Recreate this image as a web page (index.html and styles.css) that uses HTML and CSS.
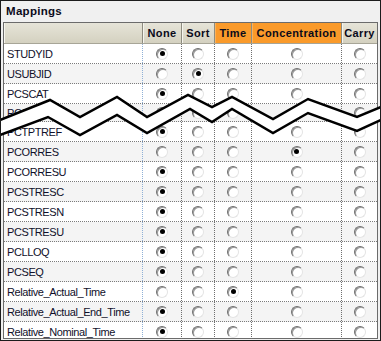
FILE: index.html
```html
<!DOCTYPE html>
<html>
<head>
<meta charset="utf-8">
<link rel="stylesheet" href="styles.css">
</head>
<body>
<div class="frame">
  <div class="title">Mappings</div>
  <div class="grid">
    <div class="head">
      <div class="hcell"></div>
      <div class="hcell">None</div>
      <div class="hcell">Sort</div>
      <div class="hcell hot">Time</div>
      <div class="hcell hot">Concentration</div>
      <div class="hcell last">Carry</div>
    </div>
    <div class="row"><div class="name">STUDYID</div><div class="c"><span class="radio on"></span></div><div class="c"><span class="radio"></span></div><div class="c"><span class="radio"></span></div><div class="c"><span class="radio"></span></div><div class="c last"><span class="radio"></span></div></div>
    <div class="row"><div class="name">USUBJID</div><div class="c"><span class="radio"></span></div><div class="c"><span class="radio on"></span></div><div class="c"><span class="radio"></span></div><div class="c"><span class="radio"></span></div><div class="c last"><span class="radio"></span></div></div>
    <div class="row"><div class="name">PCSCAT</div><div class="c"><span class="radio on"></span></div><div class="c"><span class="radio"></span></div><div class="c"><span class="radio"></span></div><div class="c"><span class="radio"></span></div><div class="c last"><span class="radio"></span></div></div>
    <div class="row cut"><div class="name">PCSPEC</div><div class="c"><span class="radio on"></span></div><div class="c"><span class="radio"></span></div><div class="c"><span class="radio"></span></div><div class="c"><span class="radio"></span></div><div class="c last"><span class="radio"></span></div></div>
    <div class="row"><div class="name">PCTPTREF</div><div class="c"><span class="radio on"></span></div><div class="c"><span class="radio"></span></div><div class="c"><span class="radio"></span></div><div class="c"><span class="radio"></span></div><div class="c last"><span class="radio"></span></div></div>
    <div class="row"><div class="name">PCORRES</div><div class="c"><span class="radio"></span></div><div class="c"><span class="radio"></span></div><div class="c"><span class="radio"></span></div><div class="c"><span class="radio on"></span></div><div class="c last"><span class="radio"></span></div></div>
    <div class="row"><div class="name">PCORRESU</div><div class="c"><span class="radio on"></span></div><div class="c"><span class="radio"></span></div><div class="c"><span class="radio"></span></div><div class="c"><span class="radio"></span></div><div class="c last"><span class="radio"></span></div></div>
    <div class="row"><div class="name">PCSTRESC</div><div class="c"><span class="radio on"></span></div><div class="c"><span class="radio"></span></div><div class="c"><span class="radio"></span></div><div class="c"><span class="radio"></span></div><div class="c last"><span class="radio"></span></div></div>
    <div class="row"><div class="name">PCSTRESN</div><div class="c"><span class="radio on"></span></div><div class="c"><span class="radio"></span></div><div class="c"><span class="radio"></span></div><div class="c"><span class="radio"></span></div><div class="c last"><span class="radio"></span></div></div>
    <div class="row"><div class="name">PCSTRESU</div><div class="c"><span class="radio on"></span></div><div class="c"><span class="radio"></span></div><div class="c"><span class="radio"></span></div><div class="c"><span class="radio"></span></div><div class="c last"><span class="radio"></span></div></div>
    <div class="row"><div class="name">PCLLOQ</div><div class="c"><span class="radio on"></span></div><div class="c"><span class="radio"></span></div><div class="c"><span class="radio"></span></div><div class="c"><span class="radio"></span></div><div class="c last"><span class="radio"></span></div></div>
    <div class="row"><div class="name">PCSEQ</div><div class="c"><span class="radio on"></span></div><div class="c"><span class="radio"></span></div><div class="c"><span class="radio"></span></div><div class="c"><span class="radio"></span></div><div class="c last"><span class="radio"></span></div></div>
    <div class="row"><div class="name">Relative_Actual_Time</div><div class="c"><span class="radio"></span></div><div class="c"><span class="radio"></span></div><div class="c"><span class="radio on"></span></div><div class="c"><span class="radio"></span></div><div class="c last"><span class="radio"></span></div></div>
    <div class="row"><div class="name">Relative_Actual_End_Time</div><div class="c"><span class="radio on"></span></div><div class="c"><span class="radio"></span></div><div class="c"><span class="radio"></span></div><div class="c"><span class="radio"></span></div><div class="c last"><span class="radio"></span></div></div>
    <div class="row"><div class="name">Relative_Nominal_Time</div><div class="c"><span class="radio on"></span></div><div class="c"><span class="radio"></span></div><div class="c"><span class="radio"></span></div><div class="c"><span class="radio"></span></div><div class="c last"><span class="radio"></span></div></div>
  </div>
  <svg class="break" width="381" height="341" viewBox="0 0 381 341">
    <polygon fill="#fff" points="0,120 50,100 80,117 117,97 147,117 188,95 212,107 232,97 273,119 308,99 357,117 381,107 381,120 357,131 308,113 273,133 232,109 212,122 190,109 147,133 117,115 80,135 48,117 0,135"/>
    <polyline fill="none" stroke="#000" stroke-width="2.5" points="0,120 50,100 80,117 117,97 147,117 188,95 212,107 232,97 273,119 308,99 357,117 381,107"/>
    <polyline fill="none" stroke="#000" stroke-width="2.5" points="0,135 48,117 80,135 117,115 147,133 190,109 212,122 232,109 273,133 308,113 357,131 381,120"/>
  </svg>
</div>
</body>
</html>
```

FILE: styles.css
```css
html, body {
  margin: 0;
  padding: 0;
  background: #fff;
}

.frame {
  position: relative;
  width: 381px;
  height: 341px;
  box-sizing: border-box;
  border: 1px solid #1c1c1c;
  background: #f0f0f0;
  display: flex;
  flex-direction: column;
  overflow: hidden;
  font-family: "Liberation Sans", Arial, sans-serif;
  color: #000;
}

.title {
  height: 21px;
  line-height: 21px;
  padding-left: 5px;
  font-weight: bold;
  font-size: 11.5px;
  letter-spacing: 0.3px;
  color: #0b0b1a;
}

.grid {
  flex: 1;
  margin: 0 2px 1px 2px;
  border: 1px solid #6b6b6b;
  background: #fff;
  overflow: hidden;
}

.head,
.row {
  display: grid;
  grid-template-columns: 139px 39px 33px 37px 90px 35px;
}

.head {
  height: 21px;
  box-sizing: border-box;
  border-bottom: 1px solid #a7a597;
}

.hcell {
  box-sizing: border-box;
  border-right: 1px solid #8e8c80;
  box-shadow: inset 1px 0 0 #f6f5ee;
  background: linear-gradient(#e6e4d8, #d4d1c0);
  display: flex;
  align-items: center;
  justify-content: center;
  font-weight: bold;
  font-size: 11px;
  letter-spacing: 0.4px;
  color: #0a0a1a;
}

.hcell.hot {
  background: #fa9a2a;
  box-shadow: inset 1px 0 0 #fbb25a;
}

.hcell.last {
  border-right: none;
}

.row {
  height: 20px;
  box-sizing: border-box;
  border-bottom: 1px dotted #7b7b7b;
}

.row:nth-child(odd) {
  background: #f4f4f4;
}

.row.cut {
  height: 18px;
}

.name {
  box-sizing: border-box;
  border-right: 1px dotted #8fb0d6;
  padding-left: 3px;
  display: flex;
  align-items: center;
  font-size: 11px;
  letter-spacing: -0.4px;
  white-space: nowrap;
  overflow: hidden;
  color: #10102a;
}

.c {
  box-sizing: border-box;
  border-right: 1px dotted #6f6f6f;
  display: flex;
  align-items: center;
  justify-content: center;
}

.c.last {
  border-right: none;
}

.radio {
  position: relative;
  display: block;
  width: 12px;
  height: 12px;
  box-sizing: border-box;
  border-radius: 50%;
  border: 1px solid;
  border-color: #6e6e6e #e4e4e4 #e4e4e4 #6e6e6e;
  background: #fff;
  box-shadow: inset 1px 1px 0 #9a9a9a;
}

.radio.on::after {
  content: "";
  position: absolute;
  left: 2.5px;
  top: 2.5px;
  width: 5px;
  height: 5px;
  border-radius: 50%;
  background: #000;
}

.break {
  position: absolute;
  left: -1px;
  top: -1px;
}
```
